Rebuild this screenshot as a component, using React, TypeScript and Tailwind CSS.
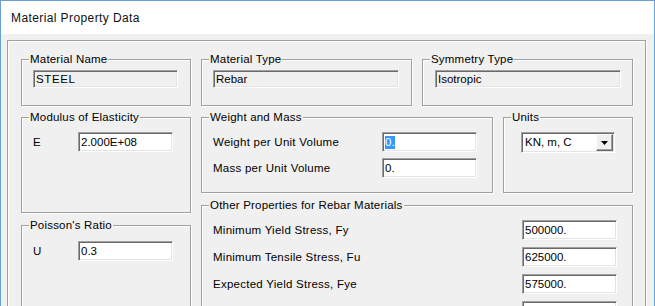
import React from "react";

const font = { fontFamily: '"Liberation Sans", Arial, sans-serif' };

function Group({
  label,
  className,
  children,
}: {
  label: string;
  className: string;
  children?: React.ReactNode;
}) {
  return (
    <div
      className={`relative border border-[#a0a0a0] shadow-[inset_1px_1px_0_#ffffff,1px_1px_0_#ffffff] ${className}`}
    >
      <span className="absolute -top-[8px] left-[7px] bg-[#f0f0f0] px-[1px] text-[11.5px] leading-[14px] tracking-[0.2px] text-black whitespace-nowrap">
        {label}
      </span>
      {children}
    </div>
  );
}

function Field({
  value,
  readOnly,
  className,
  selected,
}: {
  value: string;
  readOnly?: boolean;
  className: string;
  selected?: boolean;
}) {
  return (
    <div
      className={`flex items-center border border-t-[#a0a0a0] border-l-[#a0a0a0] border-b-white border-r-white shadow-[inset_1px_1px_0_#696969,inset_-1px_-1px_0_#e3e3e3] pl-[2px] text-[11.5px] leading-[13px] text-black whitespace-nowrap overflow-hidden ${
        readOnly ? "bg-[#f0f0f0]" : "bg-white"
      } ${className}`}
    >
      {selected ? (
        <span className="bg-[#3399ff] text-white">{value}</span>
      ) : (
        <span>{value}</span>
      )}
    </div>
  );
}

function Row({
  label,
  value,
  labelW,
  selected,
}: {
  label: string;
  value: string;
  labelW: string;
  selected?: boolean;
}) {
  return (
    <div className="flex items-center h-[20px]">
      <span className={`${labelW} text-[11.5px] leading-[14px] tracking-[0.25px] text-black whitespace-nowrap`}>
        {label}
      </span>
      <Field value={value} className="w-[95px] h-[20px]" selected={selected} />
    </div>
  );
}

export default function App() {
  return (
    <div
      className="w-[655px] h-[306px] overflow-hidden bg-[#f0f0f0] border-l border-t border-r border-[#6aa0d8]"
      style={font}
    >
      <div className="h-[33px] bg-white flex items-center pl-[10px] text-[12px] tracking-[0.4px] text-[#111]">
        Material Property Data
      </div>
      <div className="pt-[6px] pl-[6px] pr-[8px]">
        <div className="h-[300px] border border-[#a0a0a0] shadow-[inset_1px_1px_0_#ffffff,1px_1px_0_#ffffff] pl-[13px] pt-[18px]">
          {/* Row 1 */}
          <div className="flex gap-[10px]">
            <Group label="Material Name" className="w-[170px] h-[47px] pt-[10px] pl-[11px] pr-[12px]">
              <Field value="STEEL" readOnly className="w-full h-[18px] tracking-[0.6px]" />
            </Group>
            <Group label="Material Type" className="w-[211px] h-[47px] pt-[10px] pl-[11px] pr-[12px]">
              <Field value="Rebar" readOnly className="w-full h-[18px]" />
            </Group>
            <Group label="Symmetry Type" className="w-[211px] h-[47px] pt-[10px] pl-[12px] pr-[11px]">
              <Field value="Isotropic" readOnly className="w-full h-[18px]" />
            </Group>
          </div>
          {/* Row 2 */}
          <div className="flex gap-[10px] mt-[11px]">
            <div className="w-[170px] flex flex-col">
              <Group label="Modulus of Elasticity" className="h-[96px] pt-[14px] pl-[11px]">
                <Row label="E" value="2.000E+08" labelW="w-[45px]" />
              </Group>
              <Group label="Poisson's Ratio" className="mt-[12px] h-[100px] pt-[15px] pl-[11px]">
                <Row label="U" value="0.3" labelW="w-[45px]" />
              </Group>
            </div>
            <div className="w-[432px] flex flex-col">
              <div className="flex gap-[10px]">
                <Group label="Weight and Mass" className="w-[292px] h-[76px] pt-[14px] pl-[11px] flex flex-col gap-[6px]">
                  <Row label="Weight per Unit Volume" value="0." labelW="w-[169px]" selected />
                  <Row label="Mass per Unit Volume" value="0." labelW="w-[169px]" />
                </Group>
                <Group label="Units" className="w-[130px] h-[76px] pt-[14px] pl-[17px]">
                  <div className="w-[94px] h-[21px] flex items-stretch bg-white border border-t-[#a0a0a0] border-l-[#a0a0a0] border-b-white border-r-white shadow-[inset_1px_1px_0_#696969,inset_-1px_-1px_0_#e3e3e3] p-[1px]">
                    <span className="flex-1 flex items-center pl-[2px] text-[11.5px] leading-[13px] text-black whitespace-nowrap">
                      KN, m, C
                    </span>
                    <span className="w-[17px] flex items-center justify-center bg-[#f0f0f0] border border-t-white border-l-white border-b-[#696969] border-r-[#696969] shadow-[inset_-1px_-1px_0_#a0a0a0]">
                      <svg width="7" height="4" viewBox="0 0 7 4">
                        <path d="M0 0H7L3.5 4Z" fill="#000" />
                      </svg>
                    </span>
                  </div>
                </Group>
              </div>
              <Group label="Other Properties for Rebar Materials" className="mt-[12px] h-[120px] pt-[14px] pl-[11px] flex flex-col gap-[7px]">
                <Row label="Minimum Yield Stress, Fy" value="500000." labelW="w-[309px]" />
                <Row label="Minimum Tensile Stress, Fu" value="625000." labelW="w-[309px]" />
                <Row label="Expected Yield Stress, Fye" value="575000." labelW="w-[309px]" />
                <Row label="Expected Tensile Stress, Fue" value="687500." labelW="w-[309px]" />
              </Group>
            </div>
          </div>
        </div>
      </div>
    </div>
  );
}
